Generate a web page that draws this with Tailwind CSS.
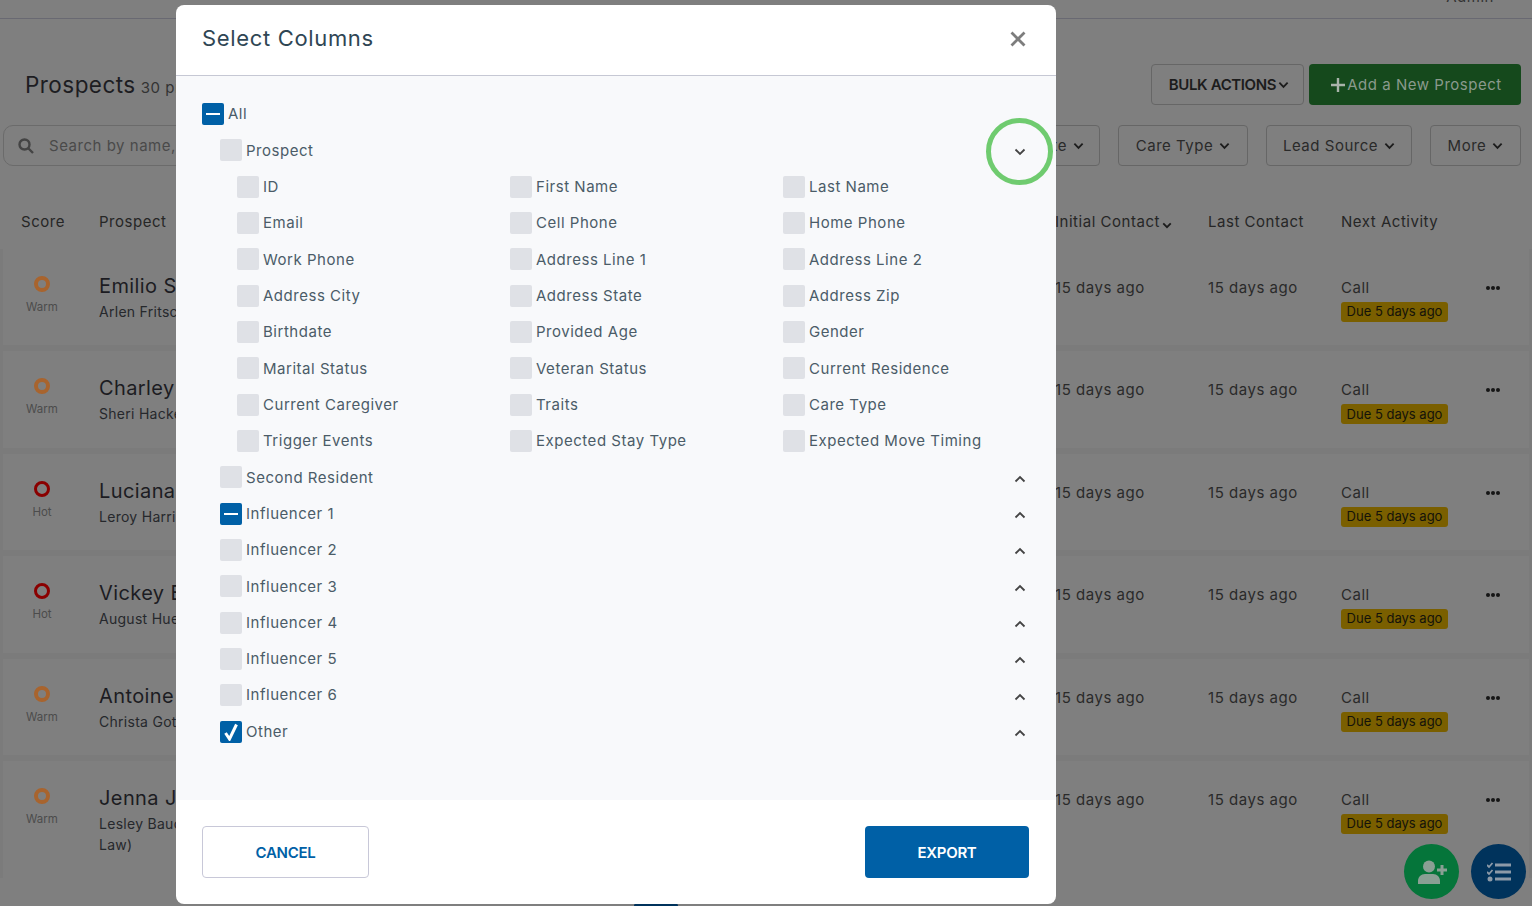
<!DOCTYPE html>
<html lang="en">
<head>
  <meta charset="UTF-8" />
  <title>Select Columns</title>
  <script src="https://cdn.jsdelivr.net/npm/@tailwindcss/browser@4"></script>
</head>
<body class="relative h-[906px] overflow-hidden bg-[#7f7f7f] font-[Inter,sans-serif] text-[15px] tracking-[0.035em] text-[#222]">

  <!-- Page behind the dialog -->
  <header class="flex h-[19px] items-end justify-end overflow-hidden border-b border-[#696972] pr-[38px]">
    <span class="mb-[10px] text-[#333]">Admin</span>
  </header>

  <div class="mt-[45px] flex h-[41px] items-center justify-between pl-[25px] pr-[11px]">
    <div class="flex items-baseline gap-[5px]">
      <span class="text-[22.500px] tracking-[0.02em] text-[#1d1d22]">Prospects</span>
      <span class="text-[#333]">30 prospects</span>
    </div>
    <div class="flex gap-[5px]">
      <button class="flex h-[41px] w-[153px] items-center justify-center gap-[2px] rounded border border-[#666] pl-[3px] font-semibold tracking-[-0.025em] text-[#1c1c1c]"><span class="mt-[1px]">BULK ACTIONS</span>
        <svg class="h-[8px] w-[11px]" viewBox="0 0 12 8" fill="none" stroke="#1c1c1c" stroke-width="2"><path d="M1.5 1.5 6 6l4.5-4.5"/></svg>
      </button>
      <button class="flex h-[41px] w-[212px] items-center justify-center gap-[2px] rounded bg-[#15491c] pl-[3px] text-[#8a9a8c]">
        <svg class="h-[14px] w-[14px]" viewBox="0 0 14 14" fill="none" stroke="#a9b3aa" stroke-width="2.4"><path d="M7 0v14M0 7h14"/></svg><span class="mt-[1px]">Add a New Prospect</span>
      </button>
    </div>
  </div>

  <div class="mt-[20px] flex h-[41px] justify-between pl-[3px] pr-[11px]">
    <div class="flex w-[400px] items-center gap-[15px] rounded-[10px] border border-[#6b6b6b] pl-[14px] text-[#4a4a4a]">
      <svg class="h-[16px] w-[16px]" viewBox="0 0 16 16" fill="none" stroke="#444" stroke-width="2.4"><circle cx="6.5" cy="6.5" r="5"/><path d="m10.5 10.5 4.500 4.500"/></svg>
      <span class="mt-[2px]">Search by name, email</span>
    </div>
    <div id="filters" class="flex gap-[18px]"></div>
  </div>

  <div class="mt-[46px] flex h-[20px] items-center text-[#262626]">
    <span class="w-[99px] pl-[21px]">Score</span>
    <span class="w-[956px]">Prospect</span>
    <span class="flex w-[153px] items-center gap-[2px]">Initial Contact
      <svg class="mt-[6px] h-[7px] w-[10px]" viewBox="0 0 12 8" fill="none" stroke="#1c1c1c" stroke-width="2.2"><path d="M1.5 1.5 6 6l4.5-4.5"/></svg>
    </span>
    <span class="w-[133px]">Last Contact</span>
    <span>Next Activity</span>
  </div>

  <div id="rows" class="mt-[17px] flex flex-col gap-[6px] bg-[#7b7b7b] px-[3px]"></div>

  <!-- Sliver of the nav behind the dialog -->
  <div class="absolute bottom-0 left-[634px] h-[3px] w-[44px] rounded-t bg-[#00335c]"></div>

  <div class="absolute left-[1404px] top-[844px] flex h-[55px] w-[55px] items-center justify-center rounded-full bg-[#05753a]">
    <svg class="h-[24px] w-[30px]" viewBox="0 0 30 24" fill="#8a9f94"><circle cx="12" cy="6.5" r="6"/><path d="M1 24v-3c0-4 3-7 7-7h8c4 0 7 3 7 7v3z"/><path d="M23.500 5h3v3.500H30v3h-3.500V15h-3v-3.500H20v-3h3.500z"/></svg>
  </div>
  <div class="absolute left-[1471px] top-[844px] flex h-[55px] w-[55px] items-center justify-center rounded-full bg-[#00335c]">
    <svg class="h-[20px] w-[24px]" viewBox="0 0 24 20" fill="none" stroke="#8c9aa8" stroke-width="3"><path d="M8 3h16M8 10h16M8 17h16"/><path d="m0 3 2 2 3.500-4M0 10l2 2 3.500-4" stroke-width="1.800"/><circle cx="3" cy="17" r="2.500" fill="#8c9aa8" stroke="none"/></svg>
  </div>

  <!-- Dialog -->
  <div class="absolute left-[176px] top-[5px] flex h-[899px] w-[880px] flex-col overflow-hidden rounded-lg bg-white">
    <div class="flex h-[71px] shrink-0 items-center justify-between border-b border-[#c6c8d4] pb-[3px] pl-[26px] pr-[30px]">
      <h2 class="text-[22px] tracking-[0.03em] text-[#2f4654]">Select Columns</h2>
      <svg class="h-[16px] w-[16px]" viewBox="0 0 16 16" fill="none" stroke="#7d7d7d" stroke-width="2.800"><path d="m1.500 1.500 13 13M14.500 1.500l-13 13"/></svg>
    </div>
    <div id="tree" class="flex-1 bg-[#f8f9fb] pl-[26px] pr-[29px] pt-[19.840px] text-[#4b5c68]"></div>
    <div class="flex h-[104px] shrink-0 items-center justify-between pl-[26px] pr-[27px]">
      <button class="h-[52px] w-[167px] rounded border border-[#c8c8d8] pt-[2px] font-semibold tracking-[-0.02em] text-[#0060a6]">CANCEL</button>
      <button class="h-[52px] w-[164px] rounded bg-[#0060a6] pt-[2px] font-semibold tracking-[-0.02em] text-white">EXPORT</button>
    </div>
  </div>

  <!-- Annotation ring around the first toggle -->
  <div class="absolute left-[986px] top-[118px] h-[67px] w-[67px] rounded-full border-[5px] border-[#6fcb6f]"></div>

  <script>
    const chevron = 'M1.500 1.500 6 6l4.500-4.500';
    document.getElementById('filters').innerHTML = [['Move Date', 'w-[130px]'], ['Care Type', 'w-[130px]'], ['Lead Source', 'w-[146px]'], ['More', 'w-[91px]']].map(([label, width]) =>
      `<button class="flex items-center justify-center gap-[6px] rounded border border-[#666] text-[#2a2a2a] ${width}"><span class="mt-[2px]">${label}</span>
        <svg class="h-[8px] w-[11px]" viewBox="0 0 12 8" fill="none" stroke="#1c1c1c" stroke-width="2"><path d="${chevron}"/></svg></button>`).join('');

    const people = [
      ['Emilio Sanford', 'Arlen Fritsch', 'Warm'],
      ['Charley Boyle', 'Sheri Hacker', 'Warm'],
      ['Luciana Weber', 'Leroy Harris', 'Hot'],
      ['Vickey Ernser', 'August Huel', 'Hot'],
      ['Antoine Kell', 'Christa Gottlieb', 'Warm'],
      ['Jenna Jones', 'Lesley Bauch (Son-in-<br>Law)', 'Warm']
    ];
    document.getElementById('rows').innerHTML = people.map(([name, sub, score]) => `
      <div class="flex h-[96.400px] bg-[#7f7f7f] pt-[26px] last:h-[117px]">
        <div class="flex w-[78px] flex-col items-center">
          <span class="mt-[1px] h-[16px] w-[16px] rounded-full ${score === 'Hot' ? 'border-[3px] border-[#8a0000]' : 'border-[4px] border-[#a8642e]'}"></span>
          <span class="mt-[7px] text-[11.500px] tracking-normal text-[#4c4c4c]">${score}</span>
        </div>
        <div class="-mt-[2px] ml-[18px] w-[956px]">
          <div class="text-[20px] leading-[26px] tracking-[0.02em] text-[#1c1c22]">${name}</div>
          <div class="mt-[2px] text-[14px] leading-[21px] tracking-[0.02em] text-[#26282c]">${sub}</div>
        </div>
        <div class="w-[153px] leading-[26px] text-[#2a2a2a]">15 days ago</div>
        <div class="w-[133px] leading-[26px] text-[#2a2a2a]">15 days ago</div>
        <div class="w-[145px]">
          <div class="leading-[26px] text-[#2a2a2a]">Call</div>
          <div class="mt-[1px] flex h-[20px] w-[107px] items-center justify-center rounded-[3px] bg-[#7a5f00] text-[13px] tracking-normal text-[#14130a]">Due 5 days ago</div>
        </div>
        <div class="flex h-[26px] items-center gap-[1px]">
          <i class="h-[4px] w-[4px] rounded-full bg-[#161616]"></i><i class="h-[4px] w-[4px] rounded-full bg-[#161616]"></i><i class="h-[4px] w-[4px] rounded-full bg-[#161616]"></i>
        </div>
      </div>`).join('');

    // state: 0 empty, 1 partial, 2 checked
    function box(state) {
      if (state === 1) return '<span class="flex h-[22px] w-[22px] shrink-0 items-center justify-center rounded-[2px] bg-[#0060a6]"><i class="h-[2px] w-[14px] bg-white"></i></span>';
      if (state === 2) return '<span class="flex h-[22px] w-[22px] shrink-0 items-center justify-center rounded-[2px] bg-[#0060a6]"><svg class="h-[18px] w-[14px]" viewBox="0 0 14 18" fill="none" stroke="#fff" stroke-width="3"><path d="m1.500 10 4 6L12.500 1.500"/></svg></span>';
      return '<span class="h-[22px] w-[22px] shrink-0 rounded-[2px] bg-[#dfe1e6]"></span>';
    }
    function row(label, state, up, indent) {
      return `<div class="flex h-[36.330px] items-center gap-[4px] ${indent}">${box(state)}<span class="mt-[1px]">${label}</span>
        ${up === null ? '' : `<svg class="ml-auto mt-[3px] h-[8px] w-[14px] ${up ? 'rotate-180' : ''}" viewBox="0 0 12 8" fill="none" stroke="#444" stroke-width="1.800"><path d="${chevron}"/></svg>`}</div>`;
    }
    const fields = ['ID', 'First Name', 'Last Name', 'Email', 'Cell Phone', 'Home Phone', 'Work Phone', 'Address Line 1', 'Address Line 2', 'Address City', 'Address State', 'Address Zip', 'Birthdate', 'Provided Age', 'Gender', 'Marital Status', 'Veteran Status', 'Current Residence', 'Current Caregiver', 'Traits', 'Care Type', 'Trigger Events', 'Expected Stay Type', 'Expected Move Timing'];
    const groups = [['Second Resident', 0], ['Influencer 1', 1], ['Influencer 2', 0], ['Influencer 3', 0], ['Influencer 4', 0], ['Influencer 5', 0], ['Influencer 6', 0], ['Other', 2]];
    document.getElementById('tree').innerHTML =
      row('All', 1, null, '') +
      row('Prospect', 0, false, 'ml-[18px]') +
      '<div class="ml-[35px] grid grid-cols-[273px_273px_273px]">' + fields.map(f => row(f, 0, null, '')).join('') + '</div>' +
      groups.map(([g, s]) => row(g, s, true, 'ml-[18px]')).join('');
  </script>
</body>
</html>
